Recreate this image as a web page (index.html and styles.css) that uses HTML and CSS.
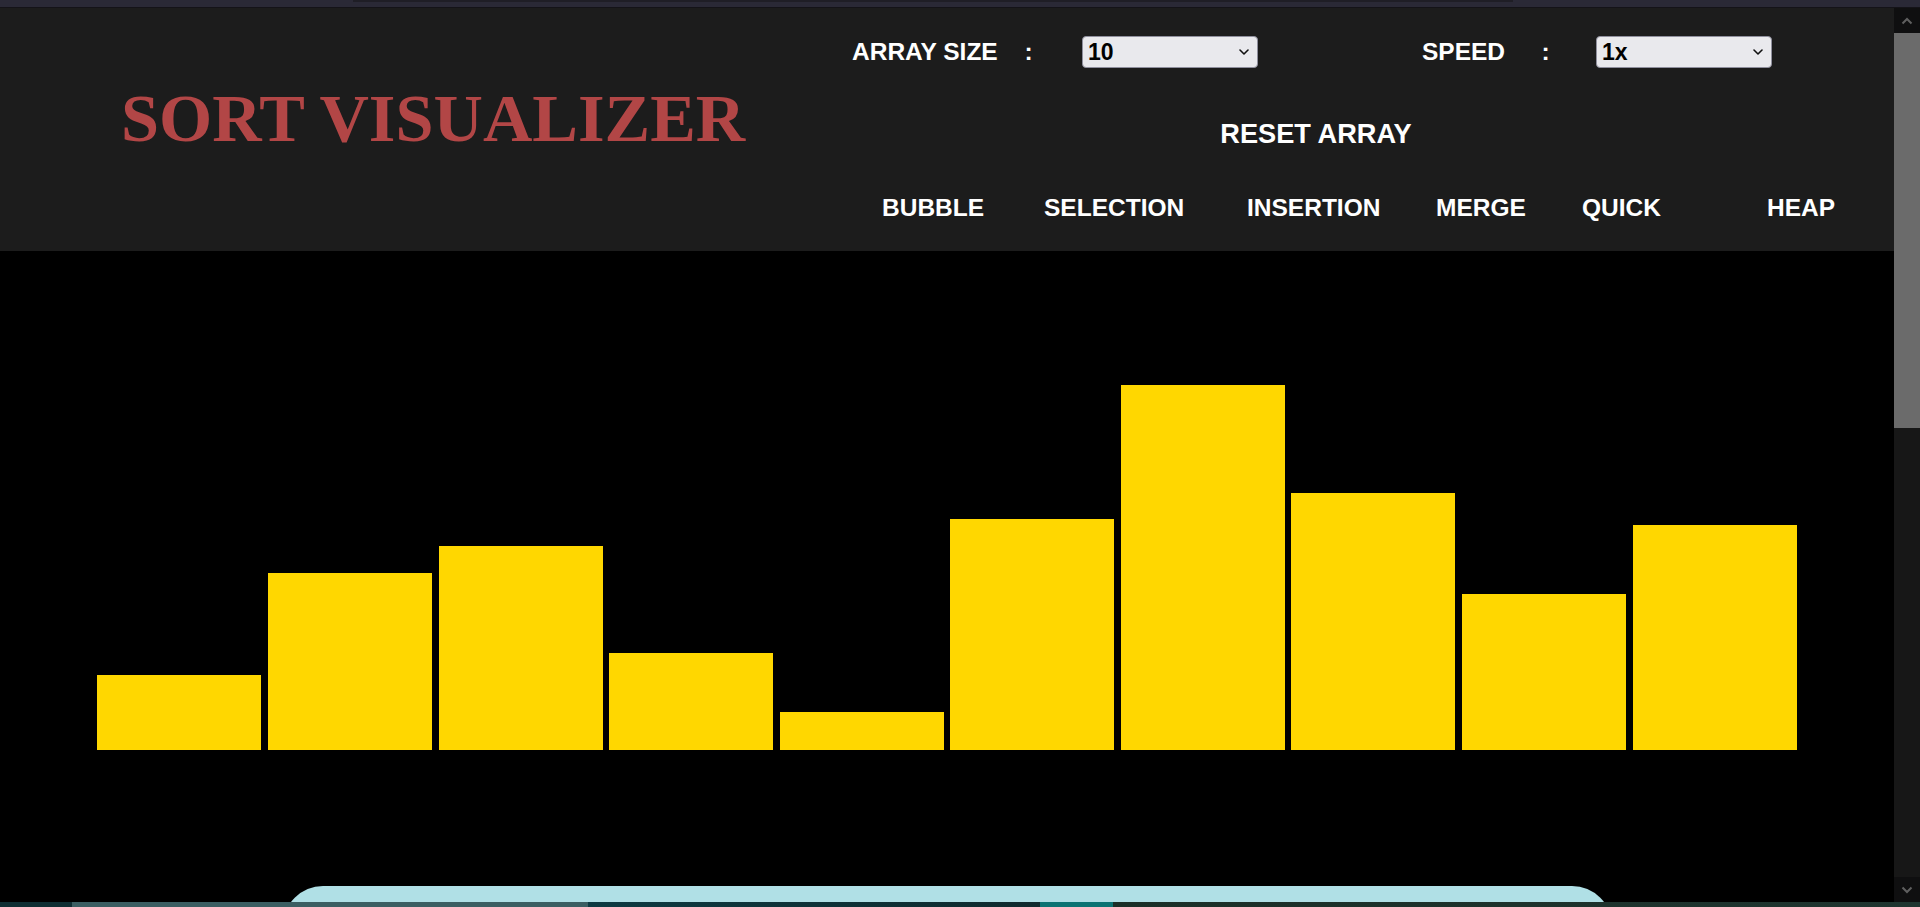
FILE: index.html
```html
<!DOCTYPE html>
<html lang="en">
<head>
<meta charset="utf-8">
<title>Sort Visualizer</title>
<link rel="stylesheet" href="styles.css">
</head>
<body>
<div class="topbar"><div class="tab"></div></div>
<div class="window">
  <div class="page">
    <header class="header">
      <div class="brand"><h1 class="title">SORT VISUALIZER</h1></div>
      <div class="controls">
        <div class="settings">
          <label class="label" for="size">ARRAY SIZE</label>
          <span class="colon">:</span>
          <div class="select-wrap">
            <select class="select" id="size"><option>10</option><option>20</option><option>50</option><option>100</option></select>
            <svg class="chev" width="10" height="6" viewBox="0 0 10 6"><path d="M1 1l4 4 4-4" fill="none" stroke="#111" stroke-width="1.6" stroke-linecap="round" stroke-linejoin="round"/></svg>
          </div>
          <label class="label" for="speed">SPEED</label>
          <span class="colon">:</span>
          <div class="select-wrap">
            <select class="select" id="speed"><option>1x</option><option>2x</option><option>4x</option></select>
            <svg class="chev" width="10" height="6" viewBox="0 0 10 6"><path d="M1 1l4 4 4-4" fill="none" stroke="#111" stroke-width="1.6" stroke-linecap="round" stroke-linejoin="round"/></svg>
          </div>
        </div>
        <div class="reset-row"><button class="btn btn-reset">RESET ARRAY</button></div>
        <nav class="algos">
          <button class="btn">BUBBLE</button>
          <button class="btn">SELECTION</button>
          <button class="btn">INSERTION</button>
          <button class="btn">MERGE</button>
          <button class="btn">QUICK</button>
          <button class="btn">HEAP</button>
        </nav>
      </div>
    </header>
    <main class="chart">
      <div class="bars">
        <div class="bar" style="height:75px"></div>
        <div class="bar" style="height:177px"></div>
        <div class="bar" style="height:204px"></div>
        <div class="bar" style="height:97px"></div>
        <div class="bar" style="height:38px"></div>
        <div class="bar" style="height:231px"></div>
        <div class="bar" style="height:365px"></div>
        <div class="bar" style="height:257px"></div>
        <div class="bar" style="height:156px"></div>
        <div class="bar" style="height:225px"></div>
      </div>
      <div class="panel"></div>
    </main>
  </div>
  <div class="scrollbar">
    <div class="sb-btn">
      <svg width="12" height="8" viewBox="0 0 12 8"><path d="M1.5 6.5L6 2l4.5 4.5" fill="none" stroke="#5f5f5f" stroke-width="2"/></svg>
    </div>
    <div class="sb-thumb"></div>
    <div class="sb-track"></div>
    <div class="sb-btn">
      <svg width="12" height="8" viewBox="0 0 12 8"><path d="M1.5 1.5L6 6l4.5-4.5" fill="none" stroke="#5f5f5f" stroke-width="2"/></svg>
    </div>
  </div>
</div>
<div class="taskbar">
  <div class="seg seg-a"></div>
  <div class="seg seg-b"></div>
  <div class="seg seg-c"></div>
  <div class="seg seg-d"></div>
  <div class="seg seg-e"></div>
</div>
</body>
</html>
```
FILE: styles.css
```css
* { box-sizing: border-box; }

html, body {
  margin: 0;
  padding: 0;
  height: 100%;
}

body {
  width: 1920px;
  height: 907px;
  overflow: hidden;
  background: #000;
  display: flex;
  flex-direction: column;
  font-family: "Liberation Sans", Arial, sans-serif;
}

/* browser chrome remnant */
.topbar {
  height: 8px;
  flex: 0 0 8px;
  background: #2a2936;
  border-bottom: 1px solid #141318;
}
.tab {
  margin-left: 353px;
  width: 1160px;
  height: 2px;
  background: #1f1e26;
}

.window {
  flex: 1 1 auto;
  display: flex;
  min-height: 0;
}

.page {
  flex: 1 1 auto;
  display: flex;
  flex-direction: column;
  overflow: hidden;
  background: #000;
}

/* header */
.header {
  height: 243px;
  flex: 0 0 243px;
  background: #1c1c1c;
  display: flex;
}

.brand {
  flex: 0 0 851px;
  padding: 71px 0 0 121px;
}

.title {
  margin: 0;
  font-family: "Liberation Serif", "Times New Roman", serif;
  font-weight: 700;
  font-size: 68.4px;
  line-height: 78px;
  color: #b24646;
  white-space: nowrap;
}

.controls {
  flex: 1 1 auto;
  padding-top: 28px;
  color: #fff;
}

.settings {
  display: grid;
  grid-template-columns: 172.5px 57.5px 340px 119.4px 54.6px 177px;
  align-items: center;
  height: 32px;
  padding-left: 1px;
}

.label, .colon {
  font-weight: 700;
  font-size: 24.5px;
  line-height: 27.6px;
  color: #fff;
  white-space: nowrap;
}

.select-wrap {
  position: relative;
  width: 176px;
  height: 32px;
}

.select {
  -webkit-appearance: none;
  appearance: none;
  width: 176px;
  height: 32px;
  margin: 0;
  padding: 0 0 0 5px;
  background: #e9e9ed;
  border: 1px solid #8f8f9d;
  border-radius: 4px;
  font-family: "Liberation Sans", Arial, sans-serif;
  font-weight: 700;
  font-size: 23px;
  color: #000;
}

.chev {
  position: absolute;
  right: 9px;
  top: 13px;
  pointer-events: none;
}

.btn {
  background: none;
  border: 0;
  padding: 0;
  margin: 0;
  color: #fff;
  font-family: "Liberation Sans", Arial, sans-serif;
  font-weight: 700;
  font-size: 24.5px;
  line-height: 28px;
  text-align: left;
  white-space: nowrap;
  cursor: pointer;
}

.reset-row {
  width: 930px;
  margin-top: 50px;
  text-align: center;
}

.btn-reset {
  font-size: 27.2px;
  line-height: 31px;
  text-align: center;
}

.algos {
  display: grid;
  grid-template-columns: 162px 203px 189px 146px 185px auto;
  justify-items: start;
  margin-top: 45px;
  padding-left: 31px;
}

/* chart */
.chart {
  flex: 1 1 auto;
  display: flex;
  flex-direction: column;
  align-items: center;
}

.bars {
  height: 499px;
  flex: 0 0 499px;
  width: 100%;
  display: flex;
  justify-content: center;
  align-items: flex-end;
}

.bar {
  width: 164px;
  margin: 0 3.3px;
  background: #ffd700;
}

.panel {
  flex: 0 0 auto;
  width: 1329px;
  height: 200px;
  margin-top: 136px;
  background: #b0e0e6;
  border-radius: 40px 40px 0 0;
}

/* scrollbar */
.scrollbar {
  flex: 0 0 26px;
  width: 26px;
  display: flex;
  flex-direction: column;
  background: #171717;
}

.sb-btn {
  height: 25px;
  flex: 0 0 25px;
  background: #0f0f10;
  display: flex;
  align-items: center;
  justify-content: center;
}

.sb-thumb {
  height: 395px;
  flex: 0 0 395px;
  background: #6b6b6b;
}

.sb-track {
  flex: 1 1 auto;
  background: #171717;
}

/* taskbar remnant */
.taskbar {
  height: 5px;
  flex: 0 0 5px;
  display: flex;
}
.seg { height: 100%; }
.seg-a { width: 72px; background: #0f2e33; }
.seg-b { width: 516px; background: #3b5e62; }
.seg-c { width: 452px; background: linear-gradient(90deg, #0d3a42, #0f2a2e); }
.seg-d { width: 73px; background: #0b7373; }
.seg-e { flex: 1; background: linear-gradient(90deg, #1b2f28, #1f3530); }
```
